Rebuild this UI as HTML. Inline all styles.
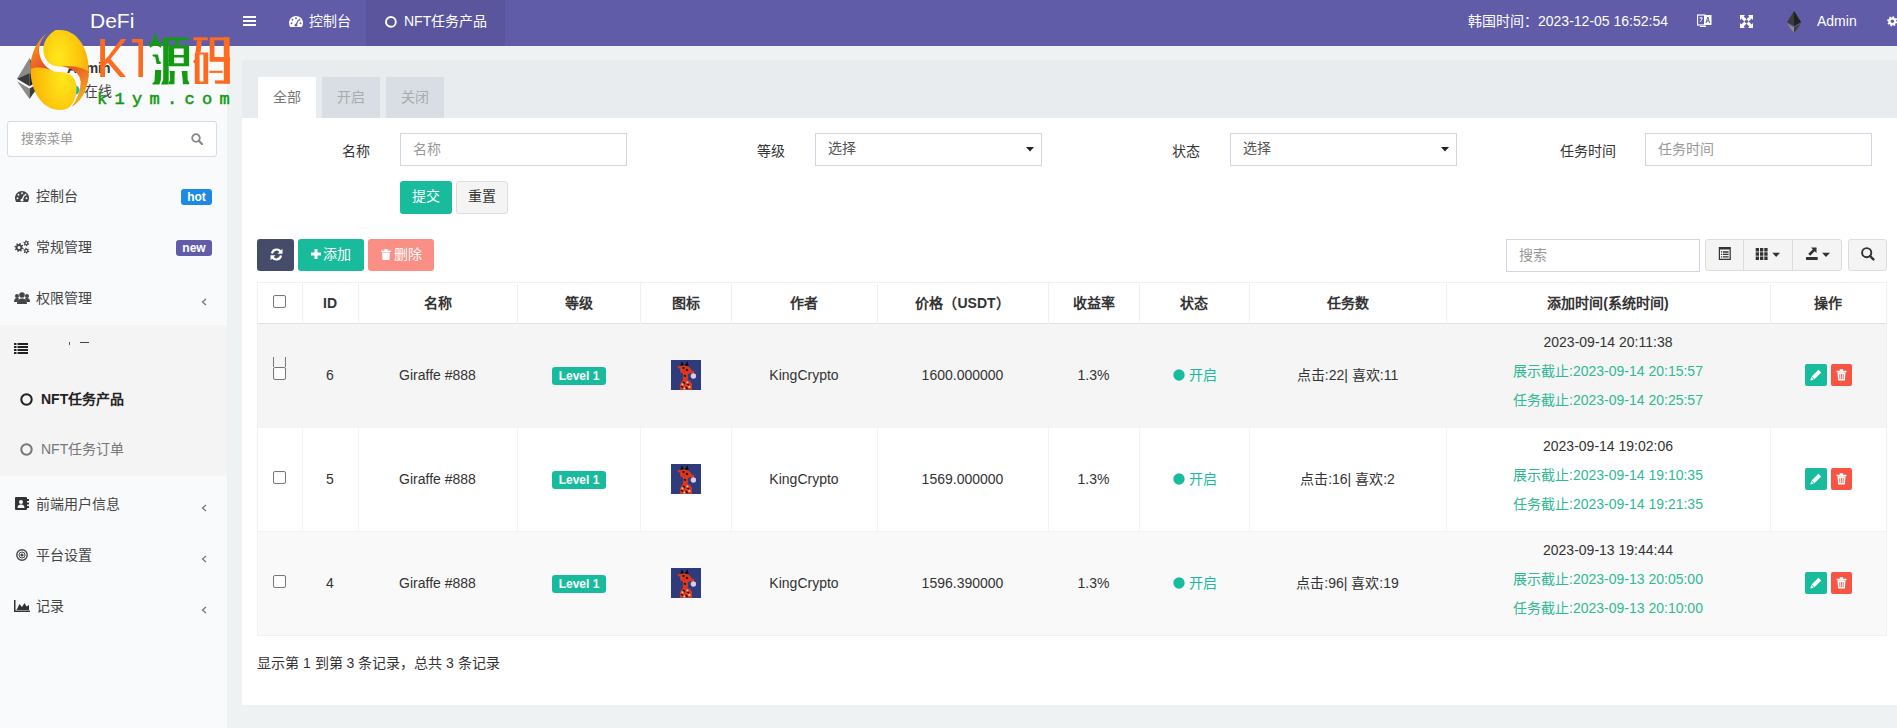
<!DOCTYPE html>
<html lang="zh-CN"><head><meta charset="utf-8">
<style>
*{box-sizing:border-box}
html,body{margin:0;padding:0}
body{width:1897px;height:728px;overflow:hidden;position:relative;background:#eff2f3;font-family:"Liberation Sans",sans-serif;font-size:14px;color:#333}
.a{position:absolute}
.t{position:absolute;white-space:nowrap;line-height:20px}
#hdr{left:0;top:0;width:1897px;height:46px;background:#605ca8}
#side{left:0;top:46px;width:227px;height:682px;background:#f9fafc}
#panel{left:242px;top:60px;width:1670px;height:645px;background:#fff}
#tabbar{left:242px;top:60px;width:1670px;height:58px;background:#e8ecee}
.tab{top:77px;height:41px;background:#d9dee4}
.inp{border:1px solid #d2d6de;background:#fff}
.ph{color:#999}
.lbl{color:#333}
.btn{border-radius:3px}
.th{font-weight:bold;color:#333}
.vl{top:283px;width:1px;height:352px;background:#eceef0}
.ok{color:#18bc9c}
</style></head><body>

<!-- header -->
<div id="hdr" class="a"></div>
<div class="t" style="left:90px;top:9px;font-size:21px;line-height:24px;color:#fff">DeFi</div>
<!-- hamburger -->
<div class="a" style="left:243px;top:16px;width:13px;height:2px;background:#fff"></div>
<div class="a" style="left:243px;top:20px;width:13px;height:2px;background:#fff"></div>
<div class="a" style="left:243px;top:24px;width:13px;height:2px;background:#fff"></div>
<!-- dashboard tab -->
<svg class="a" style="left:289px;top:16px" width="14" height="11" viewBox="0 0 14 11"><path d="M7 0C3.1 0 0 3.1 0 7c0 1.5.4 2.8 1.1 4h11.8c.7-1.2 1.1-2.5 1.1-4 0-3.9-3.1-7-7-7z" fill="#fff"/><g fill="#605ca8"><circle cx="2.5" cy="7.3" r="0.95"/><circle cx="3.5" cy="3.7" r="0.95"/><circle cx="7" cy="2.2" r="0.95"/><circle cx="10.5" cy="3.7" r="0.95"/><circle cx="11.5" cy="7.3" r="0.95"/><circle cx="7" cy="9.2" r="1.4"/></g><path d="M7 9.2L9.4 4" stroke="#605ca8" stroke-width="1.3"/></svg>
<div class="t" style="left:309px;top:11px;color:#fff">控制台</div>
<div class="a" style="left:366px;top:0;width:139px;height:46px;background:#5a559c"></div>
<svg class="a" style="left:385px;top:16px" width="12" height="12" viewBox="0 0 12 12"><circle cx="5.9" cy="5.9" r="4.9" fill="none" stroke="#fff" stroke-width="1.9"/></svg>
<div class="t" style="left:404px;top:11px;color:#fff">NFT任务产品</div>

<div class="t" style="left:1468px;top:11px;color:#fff">韩国时间：2023-12-05 16:52:54</div>
<!-- translate icon -->
<svg class="a" style="left:1697px;top:14px" width="15" height="14" viewBox="0 0 15 14"><rect x="0.5" y="1" width="7.5" height="10" fill="none" stroke="#fff" stroke-width="1.2"/><rect x="7" y="1" width="7.5" height="10" fill="#fff"/><path d="M9 9l1.8-6 1.8 6M9.6 7h2.4" stroke="#605ca8" stroke-width="1" fill="none"/><path d="M2.5 4h3M4 3v1M3 8c1-1 2-3 2-4" stroke="#fff" stroke-width="0.9" fill="none"/><path d="M3 12.5h6" stroke="#fff" stroke-width="1"/></svg>
<!-- expand icon -->
<svg class="a" style="left:1740px;top:15px" width="13" height="13" viewBox="0 0 13 13"><path d="M0 0h5L3.6 1.4 6.5 4.3 4.3 6.5 1.4 3.6 0 5zM13 0v5l-1.4-1.4-2.9 2.9-2.2-2.2 2.9-2.9L8 0zM13 13H8l1.4-1.4-2.9-2.9 2.2-2.2 2.9 2.9L13 8zM0 13V8l1.4 1.4 2.9-2.9 2.2 2.2-2.9 2.9L5 13z" fill="#fff"/></svg>
<!-- eth -->
<svg class="a" style="left:1787px;top:11px" width="14" height="22" viewBox="0 0 14 22"><path d="M7 0L0 11.2 7 15.3 14 11.2z" fill="#3c3c3b"/><path d="M7 0v15.3l7-4.1z" fill="#222"/><path d="M0 12.6L7 22V16.6z" fill="#8c8c8c"/><path d="M14 12.6L7 22V16.6z" fill="#3c3c3b"/></svg>
<div class="t" style="left:1817px;top:11px;color:#fff">Admin</div>
<svg class="a" style="left:1887px;top:15.5px" width="11" height="11" viewBox="0 0 11 11"><path fill-rule="evenodd" fill="#fff" d="M9.30 5.30 L10.46 5.91 L10.10 7.29 L8.79 7.25 L8.13 8.13 L8.52 9.38 L7.29 10.10 L6.39 9.15 L5.30 9.30 L4.69 10.46 L3.31 10.10 L3.35 8.79 L2.47 8.13 L1.22 8.52 L0.50 7.29 L1.45 6.39 L1.30 5.30 L0.14 4.69 L0.50 3.31 L1.81 3.35 L2.47 2.47 L2.08 1.22 L3.31 0.50 L4.21 1.45 L5.30 1.30 L5.91 0.14 L7.29 0.50 L7.25 1.81 L8.13 2.47 L9.38 2.08 L10.10 3.31 L9.15 4.21z M7.10 5.30 A1.8 1.8 0 1 0 3.50 5.30 A1.8 1.8 0 1 0 7.10 5.30z"/></svg>

<!-- sidebar -->
<div id="side" class="a"></div>
<div class="a" style="left:0;top:325px;width:227px;height:151px;background:#f4f4f5"></div>


<!-- user panel -->
<svg class="a" style="left:17px;top:58px" width="25" height="41" viewBox="0 0 25 41"><path d="M12.5 0L0 20.8 12.5 15z" fill="#8a8a8a"/><path d="M12.5 15L0 20.8 12.5 28.2z" fill="#3a3a3a"/><path d="M12.5 0L25 20.8 12.5 15z" fill="#5a5a5a"/><path d="M12.5 15L25 20.8 12.5 28.2z" fill="#222"/><path d="M0 23.2L12.5 41V30.6z" fill="#8c8c8c"/><path d="M25 23.2L12.5 41V30.6z" fill="#3c3c3b"/></svg>
<div class="t" style="left:67px;top:58px;font-weight:bold;color:#333">Admin</div>
<svg class="a" style="left:70px;top:85px" width="10" height="10"><circle cx="5" cy="5" r="4.5" fill="#18bc9c"/></svg>
<div class="t" style="left:84px;top:81px;color:#444">在线</div>
<div class="a inp" style="left:7px;top:121px;width:210px;height:36px;border-radius:3px;border-color:#d8dce3"></div>
<div class="t" style="left:21px;top:129px;font-size:13px;color:#999">搜索菜单</div>
<svg class="a" style="left:191px;top:133px" width="12" height="12" viewBox="0 0 12 12"><circle cx="5" cy="5" r="3.8" fill="none" stroke="#888" stroke-width="1.8"/><path d="M7.8 7.8L11 11" stroke="#888" stroke-width="2.2" stroke-linecap="round"/></svg>

<!-- menu -->
<svg class="a" style="left:15px;top:191px" width="14" height="11" viewBox="0 0 14 11"><path d="M7 0C3.1 0 0 3.1 0 7c0 1.5.4 2.8 1.1 4h11.8c.7-1.2 1.1-2.5 1.1-4 0-3.9-3.1-7-7-7z" fill="#444"/><g fill="#f9fafc"><circle cx="2.5" cy="7.3" r="0.95"/><circle cx="3.5" cy="3.7" r="0.95"/><circle cx="7" cy="2.2" r="0.95"/><circle cx="10.5" cy="3.7" r="0.95"/><circle cx="11.5" cy="7.3" r="0.95"/><circle cx="7" cy="9.2" r="1.4"/></g><path d="M7 9.2L9.4 4" stroke="#f9fafc" stroke-width="1.3"/></svg>
<div class="t" style="left:36px;top:186px;color:#444">控制台</div>
<div class="a" style="left:181px;top:189px;width:31px;height:16px;background:#1e88e5;border-radius:3px"></div>
<div class="t" style="left:181px;top:189px;width:31px;height:16px;line-height:16px;text-align:center;font-size:12px;font-weight:bold;color:#fff">hot</div>

<svg class="a" style="left:14px;top:240px" width="16" height="14" viewBox="0 0 16 14"><path fill-rule="evenodd" fill="#444" d="M8.30 7.50 L9.57 8.04 L9.25 9.26 L7.88 9.11 L7.33 9.83 L7.85 11.11 L6.76 11.75 L5.90 10.68 L5.00 10.80 L4.46 12.07 L3.24 11.75 L3.39 10.38 L2.67 9.83 L1.39 10.35 L0.75 9.26 L1.82 8.40 L1.70 7.50 L0.43 6.96 L0.75 5.74 L2.12 5.89 L2.67 5.17 L2.15 3.89 L3.24 3.25 L4.10 4.32 L5.00 4.20 L5.54 2.93 L6.76 3.25 L6.61 4.62 L7.33 5.17 L8.61 4.65 L9.25 5.74 L8.18 6.60z M6.50 7.50 A1.5 1.5 0 1 0 3.50 7.50 A1.5 1.5 0 1 0 6.50 7.50z M14.30 3.20 L15.26 3.67 L14.90 4.70 L13.85 4.46 L13.30 4.93 L13.38 6.00 L12.30 6.20 L11.99 5.18 L11.30 4.93 L10.41 5.53 L9.70 4.70 L10.43 3.92 L10.30 3.20 L9.34 2.73 L9.70 1.70 L10.75 1.94 L11.30 1.47 L11.22 0.40 L12.30 0.20 L12.61 1.22 L13.30 1.47 L14.19 0.87 L14.90 1.70 L14.17 2.48z M13.20 3.20 A0.9 0.9 0 1 0 11.40 3.20 A0.9 0.9 0 1 0 13.20 3.20z M14.30 10.80 L15.26 11.27 L14.90 12.30 L13.85 12.06 L13.30 12.53 L13.38 13.60 L12.30 13.80 L11.99 12.78 L11.30 12.53 L10.41 13.13 L9.70 12.30 L10.43 11.52 L10.30 10.80 L9.34 10.33 L9.70 9.30 L10.75 9.54 L11.30 9.07 L11.22 8.00 L12.30 7.80 L12.61 8.82 L13.30 9.07 L14.19 8.47 L14.90 9.30 L14.17 10.08z M13.20 10.80 A0.9 0.9 0 1 0 11.40 10.80 A0.9 0.9 0 1 0 13.20 10.80z"/></svg>
<div class="t" style="left:36px;top:237px;color:#444">常规管理</div>
<div class="a" style="left:176px;top:240px;width:36px;height:16px;background:#605ca8;border-radius:3px"></div>
<div class="t" style="left:176px;top:240px;width:36px;height:16px;line-height:16px;text-align:center;font-size:12px;font-weight:bold;color:#fff">new</div>

<svg class="a" style="left:14px;top:292px" width="16" height="12" viewBox="0 0 16 12"><circle cx="8" cy="3" r="2.8" fill="#444"/><path d="M3 12c0-3.5 2-5.5 5-5.5s5 2 5 5.5z" fill="#444"/><circle cx="3" cy="4" r="2" fill="#444"/><circle cx="13" cy="4" r="2" fill="#444"/><path d="M0 10c0-2.5 1-4 3-4s2 .5 2 .5L3.5 10z M16 10c0-2.5-1-4-3-4s-2 .5-2 .5l1.5 3.5z" fill="#444"/></svg>
<div class="t" style="left:36px;top:288px;color:#444">权限管理</div>
<svg class="a" style="left:201px;top:298px" width="6" height="8" viewBox="0 0 6 8"><path d="M5 1L1.5 4 5 7" fill="none" stroke="#777" stroke-width="1.3"/></svg>

<svg class="a" style="left:14px;top:343px" width="14" height="11" viewBox="0 0 14 11"><rect x="0" y="0" width="2.5" height="2" fill="#222"/><rect x="3.5" y="0" width="10.5" height="2" fill="#222"/><rect x="0" y="3" width="2.5" height="2" fill="#222"/><rect x="3.5" y="3" width="10.5" height="2" fill="#222"/><rect x="0" y="6" width="2.5" height="2" fill="#222"/><rect x="3.5" y="6" width="10.5" height="2" fill="#222"/><rect x="0" y="9" width="2.5" height="2" fill="#222"/><rect x="3.5" y="9" width="10.5" height="2" fill="#222"/></svg>
<div class="a" style="left:69px;top:342px;width:1px;height:3px;background:#555"></div>
<div class="a" style="left:80px;top:342px;width:9px;height:1px;background:#444"></div>

<svg class="a" style="left:20px;top:393px" width="13" height="13" viewBox="0 0 13 13"><circle cx="6.5" cy="6.5" r="5.2" fill="none" stroke="#222" stroke-width="2"/></svg>
<div class="t" style="left:41px;top:389px;font-weight:bold;color:#222">NFT任务产品</div>
<svg class="a" style="left:20px;top:443px" width="13" height="13" viewBox="0 0 13 13"><circle cx="6.5" cy="6.5" r="5.2" fill="none" stroke="#777" stroke-width="2"/></svg>
<div class="t" style="left:41px;top:439px;color:#777">NFT任务订单</div>

<svg class="a" style="left:15px;top:497px" width="14" height="13" viewBox="0 0 14 13"><rect x="0" y="0" width="12" height="13" rx="1" fill="#333"/><rect x="12" y="2" width="2" height="2" fill="#333"/><rect x="12" y="5.5" width="2" height="2" fill="#333"/><rect x="12" y="9" width="2" height="2" fill="#333"/><circle cx="6" cy="5" r="2" fill="#f9fafc"/><path d="M2.5 11c0-2.5 1.5-3.5 3.5-3.5s3.5 1 3.5 3.5z" fill="#f9fafc"/></svg>
<div class="t" style="left:36px;top:494px;color:#444">前端用户信息</div>
<svg class="a" style="left:201px;top:504px" width="6" height="8" viewBox="0 0 6 8"><path d="M5 1L1.5 4 5 7" fill="none" stroke="#777" stroke-width="1.3"/></svg>

<svg class="a" style="left:16px;top:549px" width="12" height="12" viewBox="0 0 12 12"><circle cx="6" cy="6" r="5.2" fill="none" stroke="#444" stroke-width="1.4"/><circle cx="6" cy="6" r="3" fill="none" stroke="#444" stroke-width="1"/><circle cx="6" cy="6" r="1.6" fill="#444"/></svg>
<div class="t" style="left:36px;top:545px;color:#444">平台设置</div>
<svg class="a" style="left:201px;top:555px" width="6" height="8" viewBox="0 0 6 8"><path d="M5 1L1.5 4 5 7" fill="none" stroke="#777" stroke-width="1.3"/></svg>

<svg class="a" style="left:14px;top:600px" width="16" height="12" viewBox="0 0 16 12"><path d="M0 0h1.5v10.5H16V12H0z" fill="#333"/><path d="M2.5 10L5.5 4 8 7l2.5-4 2 3.5L15 5v5z" fill="#333"/></svg>
<div class="t" style="left:36px;top:596px;color:#444">记录</div>
<svg class="a" style="left:201px;top:606px" width="6" height="8" viewBox="0 0 6 8"><path d="M5 1L1.5 4 5 7" fill="none" stroke="#777" stroke-width="1.3"/></svg>

<!-- content -->
<div id="panel" class="a"></div>
<div id="tabbar" class="a"></div>
<div class="a" style="left:258px;top:77px;width:58px;height:41px;background:#fff"></div>
<div class="t" style="left:273px;top:87px;color:#777">全部</div>
<div class="a tab" style="left:322px;width:58px"></div>
<div class="t" style="left:337px;top:87px;color:#aaa">开启</div>
<div class="a tab" style="left:386px;width:58px"></div>
<div class="t" style="left:401px;top:87px;color:#aaa">关闭</div>


<!-- form -->
<div class="t lbl" style="left:342px;top:141px">名称</div>
<div class="a inp" style="left:400px;top:133px;width:227px;height:33px"></div>
<div class="t ph" style="left:413px;top:139px">名称</div>
<div class="t lbl" style="left:757px;top:141px">等级</div>
<div class="a inp" style="left:815px;top:133px;width:227px;height:33px"></div>
<div class="t" style="left:828px;top:138px;color:#555">选择</div>
<svg class="a" style="left:1026px;top:147px" width="9" height="5"><path d="M0 0h8L4 4.5z" fill="#222"/></svg>
<div class="t lbl" style="left:1172px;top:141px">状态</div>
<div class="a inp" style="left:1230px;top:133px;width:227px;height:33px"></div>
<div class="t" style="left:1243px;top:138px;color:#555">选择</div>
<svg class="a" style="left:1441px;top:147px" width="9" height="5"><path d="M0 0h8L4 4.5z" fill="#222"/></svg>
<div class="t lbl" style="left:1560px;top:141px">任务时间</div>
<div class="a inp" style="left:1645px;top:133px;width:227px;height:33px"></div>
<div class="t ph" style="left:1658px;top:139px">任务时间</div>

<div class="a btn" style="left:400px;top:181px;width:52px;height:33px;background:#18bc9c"></div>
<div class="t" style="left:400px;top:186px;width:52px;text-align:center;color:#fff">提交</div>
<div class="a btn" style="left:456px;top:181px;width:52px;height:33px;background:#f4f4f4;border:1px solid #ddd"></div>
<div class="t" style="left:456px;top:186px;width:52px;text-align:center;color:#333">重置</div>

<!-- toolbar -->
<div class="a btn" style="left:257px;top:239px;width:37px;height:32px;background:#444c69"></div>
<svg class="a" style="left:269.5px;top:248px" width="13" height="13" viewBox="0 0 13 13"><g transform="translate(13 0) scale(-1 1)"><path d="M11 5.5A4.6 4.6 0 0 0 2.3 4.2" fill="none" stroke="#fff" stroke-width="2.1"/><path d="M0.5 0.8v5h5z" fill="#fff"/><path d="M2 7.5A4.6 4.6 0 0 0 10.7 8.8" fill="none" stroke="#fff" stroke-width="2.1"/><path d="M12.5 12.2v-5h-5z" fill="#fff"/></g></svg>
<div class="a btn" style="left:298px;top:239px;width:66px;height:32px;background:#18bc9c"></div>
<svg class="a" style="left:311px;top:249px" width="10" height="10"><path d="M3.5 0h3v3.5H10v3H6.5V10h-3V6.5H0v-3h3.5z" fill="#fff"/></svg>
<div class="t" style="left:323px;top:244px;color:#fff">添加</div>
<div class="a btn" style="left:368px;top:239px;width:66px;height:32px;background:#f75444;opacity:.65"></div>
<svg class="a" style="left:381px;top:249px" width="10" height="11" viewBox="0 0 10 11"><path d="M0 1.5h10v1.5H0zM3.5 0h3v1.5h-3zM1 3.5h8l-.6 7.5H1.6z" fill="#fff"/></svg>
<div class="t" style="left:394px;top:244px;color:#fff">删除</div>

<div class="a inp" style="left:1506px;top:239px;width:194px;height:33px"></div>
<div class="t ph" style="left:1519px;top:245px">搜索</div>
<div class="a btn" style="left:1705px;top:239px;width:137px;height:32px;background:#f4f4f4;border:1px solid #ddd"></div>
<div class="a" style="left:1743px;top:239px;width:1px;height:32px;background:#ddd"></div>
<div class="a" style="left:1792px;top:239px;width:1px;height:32px;background:#ddd"></div>
<div class="a btn" style="left:1848px;top:239px;width:39px;height:32px;background:#f4f4f4;border:1px solid #ddd"></div>
<svg class="a" style="left:1718px;top:247px" width="14" height="14" viewBox="0 0 14 14"><path fill-rule="evenodd" fill="#333" d="M0.8 0h12v13h-12z M2 2.6h9.6v9.2H2z"/><path fill="#333" d="M3 4.3h1.2v1.2H3zM5 4.3h5.6v1.4H5zM3 6.8h1.2v1.2H3zM5 6.8h5.6v1.2H5zM3 9.2h1.2v1.2H3zM5 9.2h5.6v1.2H5z"/></svg>
<svg class="a" style="left:1755px;top:248px" width="26" height="13" viewBox="0 0 26 13"><path d="M0.7 0h3.3v3.4H0.7zM5 0h3.3v3.4H5zM9.3 0h3.3v3.4H9.3zM0.7 4.3h3.3v3.4H0.7zM5 4.3h3.3v3.4H5zM9.3 4.3h3.3v3.4H9.3zM0.7 8.6h3.3V12H0.7zM5 8.6h3.3V12H5zM9.3 8.6h3.3V12H9.3z" fill="#333"/><path d="M17.3 4.8h7.7l-3.85 4.2z" fill="#333"/></svg>
<svg class="a" style="left:1806px;top:247px" width="26" height="14" viewBox="0 0 26 14"><path d="M0 10h11.7v3H0z" fill="#333"/><path d="M2.2 6.8L6.8 2.4 5 0.5h5.5V6L8.7 4.3 4.2 8.7z" fill="#333"/><path d="M16 5.8h8l-4 4.2z" fill="#333"/></svg>
<svg class="a" style="left:1861px;top:247px" width="14" height="14" viewBox="0 0 14 14"><circle cx="5.7" cy="5.7" r="4.6" fill="none" stroke="#333" stroke-width="1.9"/><path d="M9 9L12.4 12.4" stroke="#333" stroke-width="2.4" stroke-linecap="round"/></svg>

<!-- table -->
<div class="a" style="left:257px;top:283px;width:1629px;height:41px;background:#fff"></div>
<div class="a" style="left:257px;top:324px;width:1629px;height:104px;background:#f5f5f5"></div>
<div class="a" style="left:257px;top:428px;width:1629px;height:104px;background:#fff"></div>
<div class="a" style="left:257px;top:532px;width:1629px;height:104px;background:#f9f9f9"></div>
<div class="a" style="left:257px;top:282px;width:1629px;height:1px;background:#f0f0f0"></div>
<div class="a" style="left:257px;top:323px;width:1629px;height:1px;background:#e2e2e2"></div>
<div class="a" style="left:257px;top:427px;width:1629px;height:1px;background:#f3f3f3"></div>
<div class="a" style="left:257px;top:531px;width:1629px;height:1px;background:#f3f3f3"></div>
<div class="a" style="left:257px;top:635px;width:1629px;height:1px;background:#f0f0f0"></div>
<div class="a" style="left:257px;top:282px;width:1px;height:354px;background:#f0f0f0"></div>
<div class="a" style="left:302px;top:282px;width:1px;height:42px;background:#f0f0f0"></div><div class="a" style="left:302px;top:428px;width:1px;height:104px;background:#f3f3f3"></div>
<div class="a" style="left:358px;top:282px;width:1px;height:42px;background:#f0f0f0"></div><div class="a" style="left:358px;top:428px;width:1px;height:104px;background:#f3f3f3"></div>
<div class="a" style="left:517px;top:282px;width:1px;height:42px;background:#f0f0f0"></div><div class="a" style="left:517px;top:428px;width:1px;height:104px;background:#f3f3f3"></div>
<div class="a" style="left:640px;top:282px;width:1px;height:42px;background:#f0f0f0"></div><div class="a" style="left:640px;top:428px;width:1px;height:104px;background:#f3f3f3"></div>
<div class="a" style="left:731px;top:282px;width:1px;height:42px;background:#f0f0f0"></div><div class="a" style="left:731px;top:428px;width:1px;height:104px;background:#f3f3f3"></div>
<div class="a" style="left:877px;top:282px;width:1px;height:42px;background:#f0f0f0"></div><div class="a" style="left:877px;top:428px;width:1px;height:104px;background:#f3f3f3"></div>
<div class="a" style="left:1048px;top:282px;width:1px;height:42px;background:#f0f0f0"></div><div class="a" style="left:1048px;top:428px;width:1px;height:104px;background:#f3f3f3"></div>
<div class="a" style="left:1139px;top:282px;width:1px;height:42px;background:#f0f0f0"></div><div class="a" style="left:1139px;top:428px;width:1px;height:104px;background:#f3f3f3"></div>
<div class="a" style="left:1249px;top:282px;width:1px;height:42px;background:#f0f0f0"></div><div class="a" style="left:1249px;top:428px;width:1px;height:104px;background:#f3f3f3"></div>
<div class="a" style="left:1446px;top:282px;width:1px;height:42px;background:#f0f0f0"></div><div class="a" style="left:1446px;top:428px;width:1px;height:104px;background:#f3f3f3"></div>
<div class="a" style="left:1770px;top:282px;width:1px;height:42px;background:#f0f0f0"></div><div class="a" style="left:1770px;top:428px;width:1px;height:104px;background:#f3f3f3"></div>
<div class="a" style="left:1886px;top:282px;width:1px;height:354px;background:#f0f0f0"></div>
<div class="t th" style="left:302px;top:293px;width:56px;text-align:center">ID</div>
<div class="t th" style="left:358px;top:293px;width:159px;text-align:center">名称</div>
<div class="t th" style="left:517px;top:293px;width:123px;text-align:center">等级</div>
<div class="t th" style="left:640px;top:293px;width:91px;text-align:center">图标</div>
<div class="t th" style="left:731px;top:293px;width:146px;text-align:center">作者</div>
<div class="t th" style="left:877px;top:293px;width:171px;text-align:center">价格（USDT）</div>
<div class="t th" style="left:1048px;top:293px;width:91px;text-align:center">收益率</div>
<div class="t th" style="left:1139px;top:293px;width:110px;text-align:center">状态</div>
<div class="t th" style="left:1249px;top:293px;width:197px;text-align:center">任务数</div>
<div class="t th" style="left:1446px;top:293px;width:324px;text-align:center">添加时间(系统时间)</div>
<div class="t th" style="left:1770px;top:293px;width:116px;text-align:center">操作</div>
<div class="a" style="left:273px;top:295px;width:13px;height:13px;border:1px solid #767676;border-radius:2px;background:#fff"></div>
<div class="a" style="left:273px;top:367px;width:13px;height:13px;border:1px solid #767676;border-radius:2px;background:#fff"></div>
<div class="a" style="left:273px;top:357px;width:1px;height:10px;background:#767676"></div>
<div class="a" style="left:285px;top:357px;width:1px;height:10px;background:#767676"></div>
<div class="t" style="left:302px;top:365px;width:56px;text-align:center;color:#333">6</div>
<div class="t" style="left:358px;top:365px;width:159px;text-align:center;color:#333">Giraffe #888</div>
<div class="a" style="left:552px;top:367px;width:54px;height:18px;background:#18bc9c;border-radius:3px"></div>
<div class="t" style="left:552px;top:367px;width:54px;height:18px;line-height:18px;text-align:center;font-size:12px;font-weight:bold;color:#fff">Level 1</div>
<svg class="a" style="left:671px;top:360px" width="30" height="30" viewBox="0 0 30 30"><rect width="30" height="30" fill="#2e3b7c"/><path d="M9 6.5L11 5.5 14 5.5 17 6 19.5 8.5 21 10.5 23.2 11.5 23 13.5 19 13.3 17 14 16.8 20 19 21 21 24 21 30H8.8L9 24 11 21 12 19.5 12.2 14 9.5 12.5 8.8 9z" fill="#d9381c"/><path d="M6 6.5L9 6 9.5 8.5 7.5 8.3z" fill="#d9381c"/><path d="M10 5.5L11 3 12.5 5M14.5 5.5L16 2.8 17 6M11.5 7.5l2 1M15 9.5l2 1M13 15.5l2 .8M12 22l2 1.5M16 23.5l2 1.5M10 26l2 1.5M14.5 27l2 2" stroke="#1c0d0a" stroke-width="1.5"/><path d="M10.5 23.5h1.8v2h-1.8zM15.5 21.5h1.8v2h-1.8zM17.5 26h1.8v2h-1.8zM12.5 27.5h1.8v2h-1.8z" fill="#e8c8b0"/><circle cx="22.4" cy="16" r="2.7" fill="#dccbe0"/></svg>
<div class="t" style="left:731px;top:365px;width:146px;text-align:center;color:#333">KingCrypto</div>
<div class="t" style="left:877px;top:365px;width:171px;text-align:center;color:#333">1600.000000</div>
<div class="t" style="left:1048px;top:365px;width:91px;text-align:center;color:#333">1.3%</div>
<svg class="a" style="left:1173px;top:369px" width="12" height="12"><circle cx="6" cy="6" r="5.7" fill="#18bc9c"/></svg>
<div class="t ok" style="left:1189px;top:365px">开启</div>
<div class="t" style="left:1249px;top:365px;width:197px;text-align:center;color:#333">点击:22| 喜欢:11</div>
<div class="t" style="left:1446px;top:332px;width:324px;text-align:center;color:#333">2023-09-14 20:11:38</div>
<div class="t" style="left:1446px;top:361px;width:324px;text-align:center;color:#2fb994">展示截止:2023-09-14 20:15:57</div>
<div class="t" style="left:1446px;top:390px;width:324px;text-align:center;color:#2fb994">任务截止:2023-09-14 20:25:57</div>
<div class="a btn" style="left:1805px;top:364px;width:22px;height:22px;background:#18bc9c;border-radius:2px"></div>
<svg class="a" style="left:1810px;top:369px" width="12" height="12" viewBox="0 0 12 12"><path d="M8.5 0.8l2.7 2.7-6.8 6.8-2.7-2.7z" fill="#fff"/><path d="M1.2 8.1l2.7 2.7-3.5 0.8z" fill="#fff"/></svg>
<div class="a btn" style="left:1831px;top:364px;width:21px;height:22px;background:#f75444;border-radius:2px"></div>
<svg class="a" style="left:1836px;top:369px" width="11" height="12" viewBox="0 0 11 12"><path d="M0.5 1.8h10v1.4h-10zM3.8 0.3h3.4v1.5H3.8zM1.5 3.6h8l-.6 8H2.1z" fill="#fff"/><path d="M3.8 5v5M5.5 5v5M7.2 5v5" stroke="#f75444" stroke-width="0.8"/></svg>
<div class="a" style="left:273px;top:471px;width:13px;height:13px;border:1px solid #767676;border-radius:2px;background:#fff"></div>
<div class="t" style="left:302px;top:469px;width:56px;text-align:center;color:#333">5</div>
<div class="t" style="left:358px;top:469px;width:159px;text-align:center;color:#333">Giraffe #888</div>
<div class="a" style="left:552px;top:471px;width:54px;height:18px;background:#18bc9c;border-radius:3px"></div>
<div class="t" style="left:552px;top:471px;width:54px;height:18px;line-height:18px;text-align:center;font-size:12px;font-weight:bold;color:#fff">Level 1</div>
<svg class="a" style="left:671px;top:464px" width="30" height="30" viewBox="0 0 30 30"><rect width="30" height="30" fill="#2e3b7c"/><path d="M9 6.5L11 5.5 14 5.5 17 6 19.5 8.5 21 10.5 23.2 11.5 23 13.5 19 13.3 17 14 16.8 20 19 21 21 24 21 30H8.8L9 24 11 21 12 19.5 12.2 14 9.5 12.5 8.8 9z" fill="#d9381c"/><path d="M6 6.5L9 6 9.5 8.5 7.5 8.3z" fill="#d9381c"/><path d="M10 5.5L11 3 12.5 5M14.5 5.5L16 2.8 17 6M11.5 7.5l2 1M15 9.5l2 1M13 15.5l2 .8M12 22l2 1.5M16 23.5l2 1.5M10 26l2 1.5M14.5 27l2 2" stroke="#1c0d0a" stroke-width="1.5"/><path d="M10.5 23.5h1.8v2h-1.8zM15.5 21.5h1.8v2h-1.8zM17.5 26h1.8v2h-1.8zM12.5 27.5h1.8v2h-1.8z" fill="#e8c8b0"/><circle cx="22.4" cy="16" r="2.7" fill="#dccbe0"/></svg>
<div class="t" style="left:731px;top:469px;width:146px;text-align:center;color:#333">KingCrypto</div>
<div class="t" style="left:877px;top:469px;width:171px;text-align:center;color:#333">1569.000000</div>
<div class="t" style="left:1048px;top:469px;width:91px;text-align:center;color:#333">1.3%</div>
<svg class="a" style="left:1173px;top:473px" width="12" height="12"><circle cx="6" cy="6" r="5.7" fill="#18bc9c"/></svg>
<div class="t ok" style="left:1189px;top:469px">开启</div>
<div class="t" style="left:1249px;top:469px;width:197px;text-align:center;color:#333">点击:16| 喜欢:2</div>
<div class="t" style="left:1446px;top:436px;width:324px;text-align:center;color:#333">2023-09-14 19:02:06</div>
<div class="t" style="left:1446px;top:465px;width:324px;text-align:center;color:#2fb994">展示截止:2023-09-14 19:10:35</div>
<div class="t" style="left:1446px;top:494px;width:324px;text-align:center;color:#2fb994">任务截止:2023-09-14 19:21:35</div>
<div class="a btn" style="left:1805px;top:468px;width:22px;height:22px;background:#18bc9c;border-radius:2px"></div>
<svg class="a" style="left:1810px;top:473px" width="12" height="12" viewBox="0 0 12 12"><path d="M8.5 0.8l2.7 2.7-6.8 6.8-2.7-2.7z" fill="#fff"/><path d="M1.2 8.1l2.7 2.7-3.5 0.8z" fill="#fff"/></svg>
<div class="a btn" style="left:1831px;top:468px;width:21px;height:22px;background:#f75444;border-radius:2px"></div>
<svg class="a" style="left:1836px;top:473px" width="11" height="12" viewBox="0 0 11 12"><path d="M0.5 1.8h10v1.4h-10zM3.8 0.3h3.4v1.5H3.8zM1.5 3.6h8l-.6 8H2.1z" fill="#fff"/><path d="M3.8 5v5M5.5 5v5M7.2 5v5" stroke="#f75444" stroke-width="0.8"/></svg>
<div class="a" style="left:273px;top:575px;width:13px;height:13px;border:1px solid #767676;border-radius:2px;background:#fff"></div>
<div class="t" style="left:302px;top:573px;width:56px;text-align:center;color:#333">4</div>
<div class="t" style="left:358px;top:573px;width:159px;text-align:center;color:#333">Giraffe #888</div>
<div class="a" style="left:552px;top:575px;width:54px;height:18px;background:#18bc9c;border-radius:3px"></div>
<div class="t" style="left:552px;top:575px;width:54px;height:18px;line-height:18px;text-align:center;font-size:12px;font-weight:bold;color:#fff">Level 1</div>
<svg class="a" style="left:671px;top:568px" width="30" height="30" viewBox="0 0 30 30"><rect width="30" height="30" fill="#2e3b7c"/><path d="M9 6.5L11 5.5 14 5.5 17 6 19.5 8.5 21 10.5 23.2 11.5 23 13.5 19 13.3 17 14 16.8 20 19 21 21 24 21 30H8.8L9 24 11 21 12 19.5 12.2 14 9.5 12.5 8.8 9z" fill="#d9381c"/><path d="M6 6.5L9 6 9.5 8.5 7.5 8.3z" fill="#d9381c"/><path d="M10 5.5L11 3 12.5 5M14.5 5.5L16 2.8 17 6M11.5 7.5l2 1M15 9.5l2 1M13 15.5l2 .8M12 22l2 1.5M16 23.5l2 1.5M10 26l2 1.5M14.5 27l2 2" stroke="#1c0d0a" stroke-width="1.5"/><path d="M10.5 23.5h1.8v2h-1.8zM15.5 21.5h1.8v2h-1.8zM17.5 26h1.8v2h-1.8zM12.5 27.5h1.8v2h-1.8z" fill="#e8c8b0"/><circle cx="22.4" cy="16" r="2.7" fill="#dccbe0"/></svg>
<div class="t" style="left:731px;top:573px;width:146px;text-align:center;color:#333">KingCrypto</div>
<div class="t" style="left:877px;top:573px;width:171px;text-align:center;color:#333">1596.390000</div>
<div class="t" style="left:1048px;top:573px;width:91px;text-align:center;color:#333">1.3%</div>
<svg class="a" style="left:1173px;top:577px" width="12" height="12"><circle cx="6" cy="6" r="5.7" fill="#18bc9c"/></svg>
<div class="t ok" style="left:1189px;top:573px">开启</div>
<div class="t" style="left:1249px;top:573px;width:197px;text-align:center;color:#333">点击:96| 喜欢:19</div>
<div class="t" style="left:1446px;top:540px;width:324px;text-align:center;color:#333">2023-09-13 19:44:44</div>
<div class="t" style="left:1446px;top:569px;width:324px;text-align:center;color:#2fb994">展示截止:2023-09-13 20:05:00</div>
<div class="t" style="left:1446px;top:598px;width:324px;text-align:center;color:#2fb994">任务截止:2023-09-13 20:10:00</div>
<div class="a btn" style="left:1805px;top:572px;width:22px;height:22px;background:#18bc9c;border-radius:2px"></div>
<svg class="a" style="left:1810px;top:577px" width="12" height="12" viewBox="0 0 12 12"><path d="M8.5 0.8l2.7 2.7-6.8 6.8-2.7-2.7z" fill="#fff"/><path d="M1.2 8.1l2.7 2.7-3.5 0.8z" fill="#fff"/></svg>
<div class="a btn" style="left:1831px;top:572px;width:21px;height:22px;background:#f75444;border-radius:2px"></div>
<svg class="a" style="left:1836px;top:577px" width="11" height="12" viewBox="0 0 11 12"><path d="M0.5 1.8h10v1.4h-10zM3.8 0.3h3.4v1.5H3.8zM1.5 3.6h8l-.6 8H2.1z" fill="#fff"/><path d="M3.8 5v5M5.5 5v5M7.2 5v5" stroke="#f75444" stroke-width="0.8"/></svg>
<div class="t" style="left:257px;top:653px;color:#333">显示第 1 到第 3 条记录，总共 3 条记录</div>

<!-- watermark -->
<svg class="a" style="left:0;top:0;overflow:visible" width="240" height="115" viewBox="0 0 240 115">
<defs>
<radialGradient id="gy1" cx="0.35" cy="0.35" r="0.75"><stop offset="0" stop-color="#ffe81c"/><stop offset="0.6" stop-color="#fcc60a"/><stop offset="1" stop-color="#f4a10f"/></radialGradient>
<radialGradient id="gy2" cx="0.7" cy="0.6" r="0.8"><stop offset="0" stop-color="#ffe81c"/><stop offset="0.6" stop-color="#fcc20a"/><stop offset="1" stop-color="#f4a50f"/></radialGradient>
<linearGradient id="go1" x1="0" y1="0" x2="0.6" y2="1"><stop offset="0" stop-color="#f7b21a"/><stop offset="1" stop-color="#e8452a"/></linearGradient>
<linearGradient id="go2" x1="0" y1="0" x2="0.4" y2="1"><stop offset="0" stop-color="#e8452a"/><stop offset="1" stop-color="#f7b21a"/></linearGradient>
</defs>
<path d="M47.5 33.1 C38 40 30.5 52 30.5 70 C30.5 92 43 110 60 110 C64 110 67 109 69 107.5 C74 103 76.5 96 76.5 88 C76.5 82 74.5 77.5 70 74.5 C65 71.5 59 72.5 54 71.5 C46 69 40.5 62 39.2 53 C38.3 46 41 38 47.5 33.1z" fill="url(#gy2)"/>
<path d="M47.5 33.1 C38 40 30.5 52 30.5 69 C38 66.5 46 67.5 53 71 C45 67 40.5 61 39.2 53 C38.3 46 41 38 47.5 33.1z" fill="url(#go1)"/>
<path d="M55.7 30 C57 29.9 58.5 29.9 60 30 C77 30 88.8 48 88.8 70 C88.8 86 83 100 72 106.5 C77.5 99 80.8 90 80.8 82 C80.5 76 76.5 71 70.5 68.5 C65 66.5 59 67 54 65.8 C47.5 63.5 43.8 58 43.3 50 C43 43 47 35 55.7 30z" fill="url(#gy1)"/>
<path d="M62 66.6 C72 65.5 82 67.5 88.8 71.5 C88.5 87 83 100 72 106.5 C77.5 99 80.8 90 80.8 82 C80.5 76 76.5 71 70.5 68.5 C67.5 67.5 64.8 66.9 62 66.6z" fill="url(#go2)"/>
<!-- 源 -->
<path fill="#139a13" d="M148.5 40.3 L151.6 43.2 L153.6 38.6 L155.5 32 L157.4 38.6 L159.3 43.2 L162.4 40.3 L161 47.8 L158.5 46.2 L155.5 45.6 L152.5 46.2 L150 47.8z"/>
<path fill="#139a13" d="M152.6 54.6 H158 L159.3 61 L161 62.3 L160.6 63.9 H156.6 L155.2 57 L152.6 56.3z"/>
<path fill="#139a13" d="M155.1 70 H161.2 L160.8 80 L159.4 84.6 H152.3 L152.6 83 L154.5 81.5z"/>
<path fill="#139a13" d="M163.2 37.4 H188.8 V40.3 H168.7 V79 L168.6 84.6 H161.2 L161.8 82.5 L163.2 80z"/>
<path fill="#139a13" d="M175.1 40 H178.9 L178.4 45.3 H174.9z"/>
<path fill="#139a13" fill-rule="evenodd" d="M168.5 45.3 H189.1 V66.3 H168.5z M174.1 48.5 H183.7 V54.9 H174.1z M174.1 57.4 H183.7 V63.3 H174.1z"/>
<path fill="#139a13" d="M169.6 71 H174.8 L174.4 84.3 H168.6 L168.8 82.5 L170.2 80z"/>
<path fill="#139a13" d="M181.6 71 H187.4 L187.7 80 L189.2 82.5 L189.1 84.3 H183 L182.5 78z"/>
<!-- 码 -->
<path fill="#fd6b20" d="M193.3 37.3 H207.8 V40.3 H193.3z"/>
<path fill="#fd6b20" d="M197 40.3 H201.9 L200.6 52.8 H195.4z"/>
<path fill="#fd6b20" fill-rule="evenodd" d="M194.8 52.5 H208.2 V84.1 H194.8 V63.7 L193 61.4 L194.8 59.2z M199.6 54.6 H203.4 V81.4 H199.6z"/>
<path fill="#fd6b20" d="M209.7 37.3 H229 V40.3 H209.7z"/>
<path fill="#fd6b20" d="M223.8 37.3 H229.6 V57 L230.3 59.4 L229.9 61.8 V83.6 H223.8z"/>
<path fill="#fd6b20" d="M209.7 40 H214.5 V59.6 H209.7z"/>
<path fill="#fd6b20" d="M209.7 57 H229.8 V61.8 H209.7z"/>
<path fill="#fd6b20" d="M209.3 70.7 H222.6 V72.9 H209.3z"/>
<path fill="#fd6b20" d="M214.9 80.4 H229.5 V83.7 H214.9z"/>
<!-- K -->

<path d="M100.2 39h4.8v38h-4.8z" fill="#fd6b20"/>
<path d="M104 62L121 39h5.5L105 66z" fill="#fd6b20"/>
<path d="M108.5 56.5L126 77h-6L105 59.5z" fill="#fd6b20"/>
<!-- 1 -->
<path d="M132 39h11v38h-4.6V42.5H132z" fill="#fd6b20"/>
</svg>




<div class="t" style="left:97px;top:90px;font-family:'Liberation Mono',monospace;font-size:17px;line-height:20px;letter-spacing:7.3px;-webkit-text-stroke:0.55px #149914;color:#149914">k1ym.com</div>

</body></html>
